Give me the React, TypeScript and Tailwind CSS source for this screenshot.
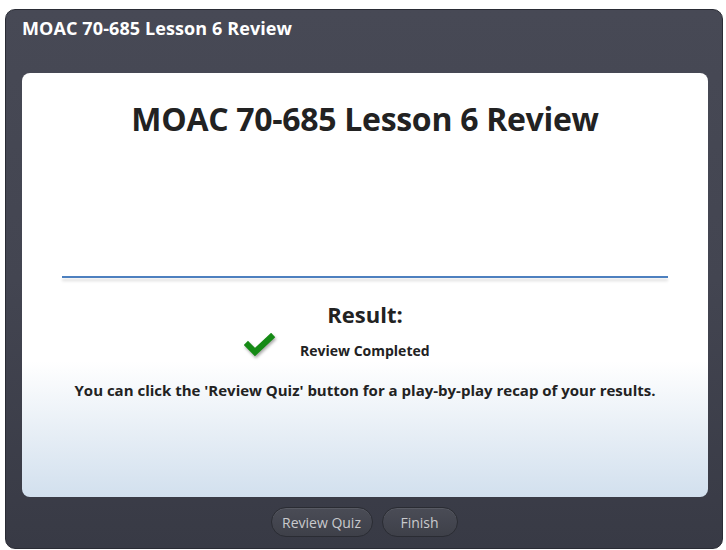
export default function App() {
  const font = { fontFamily: '"Open Sans", "Liberation Sans", sans-serif' };
  return (
    <div className="w-[726px] h-[550px] bg-white pt-[9px] pl-[5px]" style={font}>
      <div className="w-[718px] h-[540px] rounded-[10px] border border-[#2a2c35] bg-[linear-gradient(to_bottom,#474955_0%,#434551_50%,#383a45_100%)] flex flex-col">
        {/* header */}
        <div className="h-[63px] pl-[16px] pt-[6px] text-white font-bold text-[18px] leading-[24px] tracking-[0.1px]">
          MOAC 70-685 Lesson 6 Review
        </div>

        {/* card */}
        <div className="ml-[16px] w-[686px] h-[424px] rounded-[8px] bg-[linear-gradient(to_bottom,#ffffff_0%,#ffffff_68%,#e8eff6_84%,#d2e0ee_100%)] flex flex-col items-center">
          <h1 className="mt-[27px] text-[32px] leading-[38px] font-bold text-[#222222] tracking-[-0.3px]">
            MOAC 70-685 Lesson 6 Review
          </h1>

          <div className="mt-[138px] w-[606px] h-[2px] bg-[#4d80bf] shadow-[0_3px_3px_rgba(0,0,0,0.15)]" />

          <div className="mt-[22px] text-[22px] leading-[28px] font-bold text-[#222222]">Result:</div>

          <div className="mt-[5px] flex items-center w-[686px]">
            <svg width="32" height="28" viewBox="0 0 32 28" className="ml-[222px] drop-shadow-[1px_2px_1.5px_rgba(0,0,0,0.35)]">
              <polyline points="4,12 11,19 27,4" fill="none" stroke="#158a15" strokeWidth="6" strokeLinecap="square" />
            </svg>
            <span className="ml-[24px] mt-[6px] text-[14px] font-bold text-[#222222]">Review Completed</span>
          </div>

          <p className="mt-[19px] text-[15px] leading-[20px] font-bold text-[#222222]">
            You can click the 'Review Quiz' button for a play-by-play recap of your results.
          </p>
        </div>

        {/* buttons */}
        <div className="flex-1 flex justify-center items-start pt-[10px] gap-[9px]">
          <button className="w-[102px] h-[30px] rounded-full border border-[#2a2c33] bg-[linear-gradient(to_bottom,#4a4c56,#3e4049)] shadow-[inset_0_1px_0_rgba(255,255,255,0.08)] text-[14px] text-[#c9cacd]">
            Review Quiz
          </button>
          <button className="w-[76px] h-[30px] rounded-full border border-[#2a2c33] bg-[linear-gradient(to_bottom,#4a4c56,#3e4049)] shadow-[inset_0_1px_0_rgba(255,255,255,0.08)] text-[14px] text-[#c9cacd]">
            Finish
          </button>
        </div>
      </div>
    </div>
  );
}
